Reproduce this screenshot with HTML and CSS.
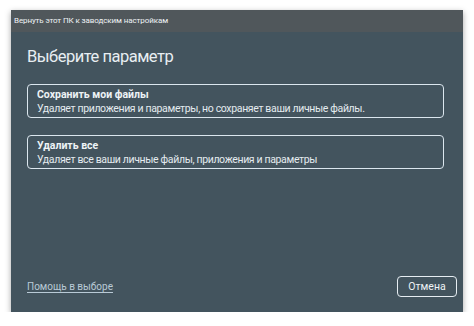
FILE: index.html
```html
<!DOCTYPE html>
<html lang="ru">
<head>
<meta charset="utf-8">
<link rel="stylesheet" href="styles.css">
</head>
<body>
<div class="window">
  <div class="titlebar">Вернуть этот ПК к заводским настройкам</div>
  <div class="content">
    <h1 class="heading">Выберите параметр</h1>
    <div class="options">
      <div class="option">
        <div class="opt-title">Сохранить мои файлы</div>
        <div class="opt-desc">Удаляет приложения и параметры, но сохраняет ваши личные файлы.</div>
      </div>
      <div class="option">
        <div class="opt-title">Удалить все</div>
        <div class="opt-desc">Удаляет все ваши личные файлы, приложения и параметры</div>
      </div>
    </div>
    <div class="footer">
      <a class="help">Помощь в выборе</a>
      <button class="cancel">Отмена</button>
    </div>
  </div>
</div>
</body>
</html>
```
FILE: styles.css
```css
html, body {
  margin: 0;
  padding: 0;
  background: #ffffff;
}
body {
  padding: 10px 11px 0 11px;
  font-family: Roboto, "Noto Sans", sans-serif;
}
.window {
  width: 452px;
  height: 302px;
  background: #43545e;
  box-shadow: 0 2px 6px rgba(0,0,0,0.35);
  display: flex;
  flex-direction: column;
}
.titlebar {
  height: 22px;
  background: #50575b;
  color: #eef2f4;
  font-size: 8px;
  letter-spacing: -0.1px;
  line-height: 22px;
  padding-left: 3px;
}
.content {
  flex: 1;
  display: flex;
  flex-direction: column;
  padding: 0 19px 15px 16px;
}
.heading {
  margin: 13px 0 0 0;
  font-weight: 400;
  font-size: 16.5px;
  letter-spacing: -0.5px;
  line-height: 24px;
  color: #e8eef2;
}
.options {
  margin-top: 15px;
  display: flex;
  flex-direction: column;
  gap: 17px;
}
.option {
  height: 34px;
  box-sizing: border-box;
  border: 1.5px solid #dbe6ee;
  border-radius: 4px;
  padding: 3px 0 0 9px;
  color: #eef3f6;
}
.opt-title {
  font-size: 10.5px;
  font-weight: 700;
  line-height: 14px;
}
.opt-desc {
  font-size: 10.5px;
  letter-spacing: -0.35px;
  line-height: 14px;
  color: #e4ebef;
}
.footer {
  margin-top: auto;
  display: flex;
  justify-content: space-between;
  align-items: center;
}
.help {
  font-size: 10px;
  color: #b9cad6;
  text-decoration: underline;
  text-underline-offset: 2px;
}
.cancel {
  width: 60px;
  height: 21px;
  margin-right: -13px;
  background: transparent;
  border: 1.5px solid #e6edf2;
  border-radius: 4px;
  color: #eef3f6;
  font-family: inherit;
  font-size: 10.5px;
  padding: 0;
}
```
